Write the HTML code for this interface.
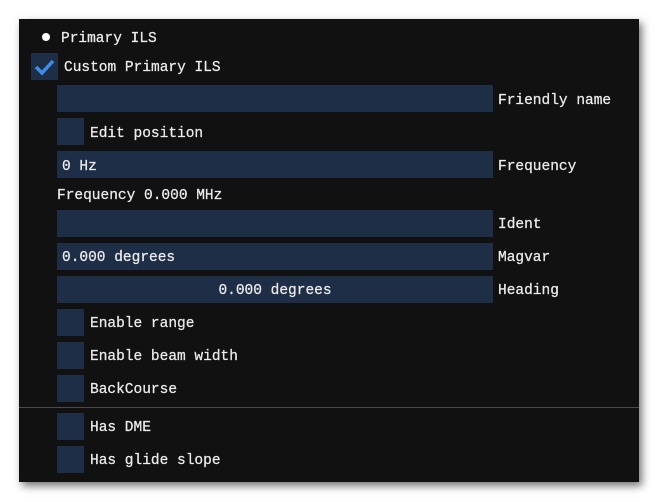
<!DOCTYPE html>
<html><head><style>
body{margin:0;width:659px;height:502px;background:#fff;position:relative;overflow:hidden;font-family:"Liberation Mono",monospace;font-size:14.5px;color:#ececec}
.p{position:absolute;left:19px;top:19px;width:620px;height:463px;background:#111;box-shadow:3px 4px 8px rgba(0,0,0,.55)}
.a{position:absolute;white-space:pre;line-height:27px;margin-top:2px;-webkit-text-stroke:0.25px #ececec}
.f{position:absolute;left:57px;width:436px;height:27px;background:#1f2e47}
.c{position:absolute;width:27px;height:27px;background:#1f2e47}
</style></head><body>
<div class="p"></div>
<div style="position:absolute;left:42px;top:33px;width:8px;height:8px;border-radius:50%;background:#fff"></div>
<div class="a" style="left:61px;top:24px">Primary ILS</div>
<div class="c" style="left:31px;top:53px"></div>
<svg style="position:absolute;left:31px;top:53px" width="27" height="27"><path d="M5 14 L11 20 L22 8" stroke="#3d8ee8" stroke-width="3.5" fill="none"/></svg>
<div class="a" style="left:64px;top:53px">Custom Primary ILS</div>
<div class="f" style="top:85px"></div><div class="a" style="left:498px;top:86px">Friendly name</div>
<div class="c" style="left:57px;top:118px"></div><div class="a" style="left:90px;top:119px">Edit position</div>
<div class="f" style="top:151px"></div><div class="a" style="left:62px;top:152px">0 Hz</div><div class="a" style="left:498px;top:152px">Frequency</div>
<div class="a" style="left:57px;top:181px">Frequency 0.000 MHz</div>
<div class="f" style="top:210px"></div><div class="a" style="left:498px;top:210px">Ident</div>
<div class="f" style="top:243px"></div><div class="a" style="left:62px;top:243px">0.000 degrees</div><div class="a" style="left:498px;top:243px">Magvar</div>
<div class="f" style="top:276px"></div><div class="a" style="left:57px;width:436px;text-align:center;top:276px">0.000 degrees</div><div class="a" style="left:498px;top:276px">Heading</div>
<div class="c" style="left:57px;top:309px"></div><div class="a" style="left:90px;top:309px">Enable range</div>
<div class="c" style="left:57px;top:342px"></div><div class="a" style="left:90px;top:342px">Enable beam width</div>
<div class="c" style="left:57px;top:375px"></div><div class="a" style="left:90px;top:375px">BackCourse</div>
<div style="position:absolute;left:19px;top:407px;width:620px;height:1px;background:#4a4a4a"></div>
<div class="c" style="left:57px;top:413px"></div><div class="a" style="left:90px;top:413px">Has DME</div>
<div class="c" style="left:57px;top:446px"></div><div class="a" style="left:90px;top:446px">Has glide slope</div>
</body></html>
